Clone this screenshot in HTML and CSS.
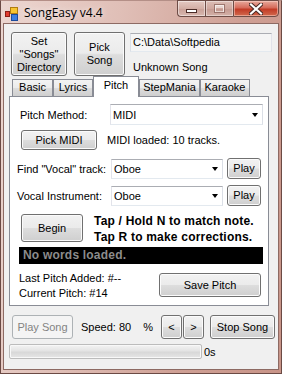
FILE: index.html
```html
<!DOCTYPE html>
<html>
<head>
<meta charset="utf-8">
<link rel="stylesheet" href="styles.css">
</head>
<body>
<div class="window">
  <div class="titlebar">
    <svg class="appicon" width="14" height="14" viewBox="0 0 14 14">
      <rect x="0.5" y="4.5" width="4" height="5" fill="#e23b2e" stroke="#8a1d15"/>
      <rect x="5.5" y="0.5" width="7" height="6" fill="#f7c531" stroke="#b07d10"/>
      <rect x="6.5" y="7.5" width="6" height="6" fill="#3d7fe0" stroke="#1d4a9a"/>
    </svg>
    <span class="title">SongEasy v4.4</span>
    <div class="caption">
      <div class="cbtn cmin"><span class="minbar"></span></div>
      <div class="cbtn cmax"><span class="maxbox"></span></div>
      <div class="cbtn cclose">
        <svg width="14" height="12" viewBox="0 0 14 12">
          <path d="M2 1.5 L12 10.5 M12 1.5 L2 10.5" stroke="#4a2a26" stroke-width="4.2" stroke-linecap="square"/>
          <path d="M2 1.5 L12 10.5 M12 1.5 L2 10.5" stroke="#ffffff" stroke-width="2.2" stroke-linecap="square"/>
        </svg>
      </div>
    </div>
  </div>
  <div class="client">
    <div class="top">
      <div class="btn setbtn">Set<br>"Songs"<br>Directory</div>
      <div class="btn pickbtn">Pick<br>Song</div>
      <div class="pathcol">
        <div class="textbox">C:\Data\Softpedia</div>
        <div class="songname">Unknown Song</div>
      </div>
    </div>
    <div class="tabs">
      <div class="tab t-basic">Basic</div>
      <div class="tab t-lyrics">Lyrics</div>
      <div class="tab sel t-pitch">Pitch</div>
      <div class="tab t-step">StepMania</div>
      <div class="tab t-kara">Karaoke</div>
    </div>
    <div class="panel">
      <div class="row r1">
        <span class="lbl l1">Pitch Method:</span>
        <div class="combo c1"><span>MIDI</span><i class="arrow"></i></div>
      </div>
      <div class="row r2">
        <div class="btn pickmidi">Pick MIDI</div>
        <span class="lbl l2">MIDI loaded: 10 tracks.</span>
      </div>
      <div class="row r3">
        <span class="lbl l3">Find "Vocal" track:</span>
        <div class="combo c2"><span>Oboe</span><i class="arrow"></i></div>
        <div class="btn playbtn">Play</div>
      </div>
      <div class="row r4">
        <span class="lbl l3">Vocal Instrument:</span>
        <div class="combo c2"><span>Oboe</span><i class="arrow"></i></div>
        <div class="btn playbtn">Play</div>
      </div>
      <div class="row r5">
        <div class="btn beginbtn">Begin</div>
        <div class="instr">Tap / Hold N to match note.<br>Tap R to make corrections.</div>
      </div>
      <div class="blackbar">No words loaded.</div>
      <div class="row r6">
        <div class="pitchinfo">Last Pitch Added: #--<br>Current Pitch: #14</div>
        <div class="btn savebtn">Save Pitch</div>
      </div>
    </div>
    <div class="controls">
      <div class="btn disabled playsong">Play Song</div>
      <span class="speed">Speed: 80</span>
      <span class="pct">%</span>
      <div class="btn arrowbtn prev">&lt;</div>
      <div class="btn arrowbtn next">&gt;</div>
      <div class="btn stopbtn">Stop Song</div>
    </div>
    <div class="progressrow">
      <div class="progress"></div>
      <span class="secs">0s</span>
    </div>
  </div>
</div>
</body>
</html>
```

FILE: styles.css
```css
* { box-sizing: border-box; }
html, body { margin: 0; padding: 0; }
body {
  width: 282px;
  height: 374px;
  overflow: hidden;
  font-family: "Liberation Sans", Arial, sans-serif;
  font-size: 11px;
  color: #000;
}
.window {
  width: 282px;
  height: 374px;
  display: flex;
  flex-direction: column;
  background: linear-gradient(100deg, #ecd6d0 0%, #e0bfb7 35%, #cfa095 70%, #c89488 100%);
  border: 1px solid #6b4a44;
  border-top-color: #b48f87;
}
.titlebar {
  height: 22px;
  display: flex;
  align-items: flex-start;
  flex: none;
}
.appicon { margin: 6px 0 0 4px; flex: none; }
.title {
  font-family: "Open Sans", "Noto Sans", sans-serif;
  font-size: 12px;
  margin: 3px 0 0 5px;
  color: #000;
  text-shadow: 0 0 6px rgba(255,255,255,0.9);
}
.caption {
  margin-left: auto;
  margin-right: 2px;
  display: flex;
  height: 17px;
  margin-top: -1px;
}
.cbtn {
  height: 17px;
  border: 1px solid #6e4c46;
  display: flex;
  align-items: center;
  justify-content: center;
}
.cmin {
  width: 28px;
  border-right: none;
  border-radius: 0 0 0 4px;
  background: linear-gradient(#e4c9c2, #d3aea5 50%, #c99f96 51%, #d8b8b0);
  box-shadow: inset 0 0 0 1px rgba(255,255,255,0.45);
}
.cmax {
  width: 28px;
  border-right: none;
  background: linear-gradient(#dcbdb5, #cfa79e 50%, #c49990 51%, #d4b1a8);
  box-shadow: inset 0 0 0 1px rgba(255,255,255,0.4);
}
.cclose {
  width: 46px;
  border-radius: 0 0 4px 0;
  background: linear-gradient(#e7a99c, #d66b5a 45%, #c23b26 55%, #d26a4e);
  box-shadow: inset 0 0 0 1px rgba(255,220,210,0.5);
}
.minbar {
  display: block;
  width: 11px;
  height: 4px;
  margin-top: 5px;
  background: #fff;
  border: 1px solid #4b2c27;
}
.maxbox {
  display: block;
  width: 11px;
  height: 9px;
  border: 1px solid rgba(120,80,74,0.6);
  box-shadow: inset 0 0 0 1px rgba(255,255,255,0.5), inset 0 2px 0 1px rgba(255,255,255,0.5);
}
.client {
  margin: 0 2px 0 2px;
  height: 347px;
  background: #f0f0f0;
  border: 1px solid #8d6a63;
  flex: none;
}

/* generic controls */
.btn {
  border: 1px solid #707070;
  border-radius: 3px;
  background: linear-gradient(#f2f2f2 0%, #ebebeb 48%, #dddddd 52%, #cfcfcf 100%);
  box-shadow: inset 0 0 0 1px #fbfbfb;
  display: flex;
  align-items: center;
  justify-content: center;
  text-align: center;
  line-height: 13px;
  flex: none;
}
.btn.disabled {
  border-color: #adb2b5;
  background: #f4f4f4;
  box-shadow: none;
  color: #838383;
}
.combo {
  border: 1px solid #abadb3;
  border-color: #abadb3 #dbdfe6 #e3e9ef #e2e3ea;
  background: #fff;
  display: flex;
  align-items: center;
  padding-left: 2px;
  flex: none;
}
.combo span { flex: 1; }
.arrow {
  width: 0;
  height: 0;
  border-left: 3.5px solid transparent;
  border-right: 3.5px solid transparent;
  border-top: 4px solid #000;
  margin-right: 4px;
}

/* top area */
.top {
  display: flex;
  padding: 8px 0 0 7px;
  height: 52px;
}
.setbtn { width: 56px; height: 44px; }
.pickbtn { width: 51px; height: 44px; margin-left: 7px; }
.pathcol { margin-left: 5px; display: flex; flex-direction: column; }
.textbox {
  width: 142px;
  height: 19px;
  margin-top: 1px;
  border: 1px solid #abadb3;
  border-color: #abadb3 #e2e3ea #e3e9ef #dbdfe6;
  background: #f5f5f5;
  padding-left: 2px;
  line-height: 17px;
}
.songname { margin-top: 8px; padding-left: 3px; line-height: 14px; }

/* tabs */
.tabs {
  display: flex;
  align-items: flex-end;
  height: 20px;
  padding-left: 8px;
}
.tab {
  height: 17px;
  border: 1px solid #898c95;
  border-bottom: none;
  background: linear-gradient(#f3f3f3, #ebebeb 50%, #dddddd 50%, #cfcfcf);
  text-align: center;
  line-height: 15px;
  flex: none;
}
.tab.sel {
  height: 21px;
  margin-bottom: -1px;
  background: #fff;
  position: relative;
  z-index: 1;
  line-height: 17px;
}
.t-basic { width: 41px; }
.t-lyrics { width: 40px; }
.t-pitch { width: 46px; }
.t-step { width: 61px; }
.t-kara { width: 50px; }

/* panel */
.panel {
  margin-left: 5px;
  width: 260px;
  height: 210px;
  border: 1px solid #898c95;
  background: #fff;
}
.row { display: flex; align-items: center; }
.r1 { margin-top: 7px; height: 21px; }
.l1 { width: 100px; padding-left: 10px; }
.c1 { width: 153px; height: 21px; }
.r2 { margin-top: 5px; height: 20px; }
.pickmidi { width: 76px; height: 20px; margin-left: 11px; }
.l2 { margin-left: 10px; }
.r3 { margin-top: 8px; height: 21px; }
.r4 { margin-top: 6px; height: 21px; }
.l3 { width: 101px; padding-left: 7px; }
.c2 { width: 112px; height: 20px; }
.playbtn { width: 34px; height: 21px; margin-left: 4px; }
.r5 { margin-top: 8px; height: 28px; align-items: flex-start; }
.beginbtn { width: 62px; height: 28px; margin-left: 11px; }
.instr {
  margin-left: 11px;
  margin-top: -1px;
  font-weight: bold;
  font-size: 12px;
  line-height: 16px;
  letter-spacing: 0.2px;
}
.blackbar {
  margin: 5px 0 0 9px;
  width: 244px;
  height: 17px;
  background: #000;
  color: #8c8c8c;
  font-weight: bold;
  font-size: 12px;
  line-height: 17px;
  padding-left: 4px;
  letter-spacing: 0.2px;
}
.r6 { margin-top: 7px; align-items: flex-start; }
.pitchinfo { padding-left: 9px; width: 149px; line-height: 15px; }
.savebtn { width: 102px; height: 24px; margin-top: 2px; }

/* bottom controls */
.controls {
  display: flex;
  align-items: center;
  margin-top: 9px;
  padding-left: 8px;
  height: 24px;
}
.playsong { width: 61px; height: 24px; }
.speed { margin-left: 8px; }
.pct { margin-left: 12px; }
.arrowbtn { width: 21px; height: 24px; }
.prev { margin-left: 8px; }
.next { margin-left: 1px; }
.stopbtn { width: 65px; height: 24px; margin-left: 6px; }
.progressrow {
  display: flex;
  align-items: center;
  margin-top: 5px;
  padding-left: 5px;
  height: 15px;
}
.progress {
  width: 193px;
  height: 15px;
  border: 1px solid #bcbcbc;
  border-radius: 2px;
  background: linear-gradient(#f3f3f3, #e4e4e4 45%, #d8d8d8 55%, #e6e6e6);
  box-shadow: inset 0 0 0 1px #f8f8f8;
}
.secs { margin-left: 2px; }
```
